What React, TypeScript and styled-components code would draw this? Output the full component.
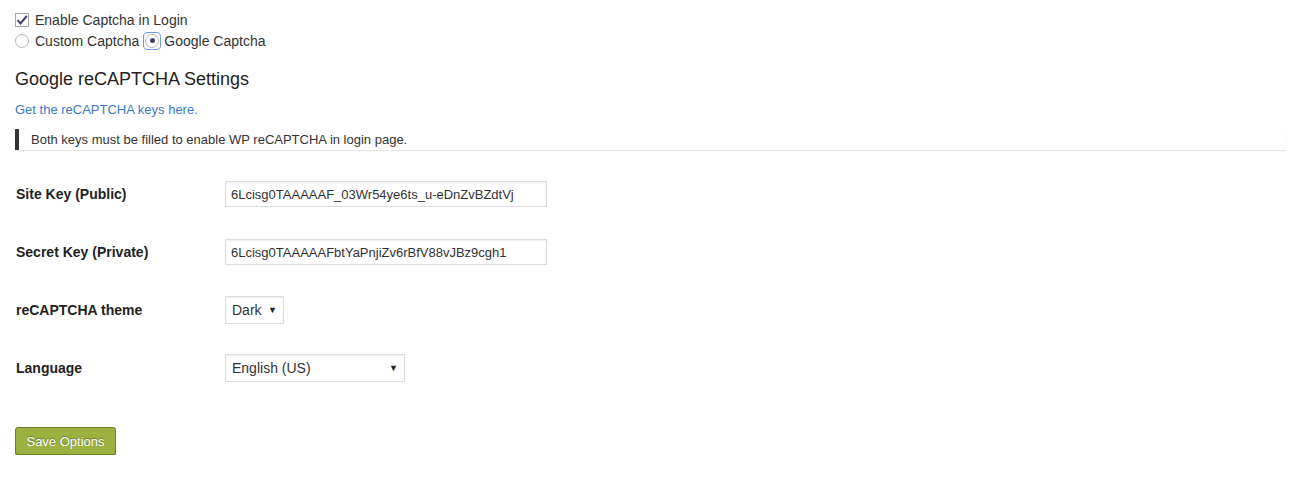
import React from "react";
import styled, { createGlobalStyle } from 'styled-components'

const Global = createGlobalStyle`
  html, body { margin: 0; padding: 0; background: #fff; }
  body { font-family: "Liberation Sans", Arial, sans-serif; color: #333; }
`

const Page = styled.div`
  padding: 12px 3px 0 15px;
  width: 1271px;
`

const OptionRow = styled.div`
  display: flex;
  align-items: center;
  height: 15px;
  font-size: 14px;
  color: #333;
  margin-bottom: 6px;
`

const Box = styled.span`
  width: 12px;
  height: 12px;
  border: 1px solid #a8a8a8;
  background: #fff;
  display: inline-flex;
  align-items: center;
  justify-content: center;
  margin-right: 6px;
`

type RadioProps = { focused?: boolean }

const RadioWrap = styled.span<RadioProps>`
  display: inline-flex;
  align-items: center;
  justify-content: center;
  width: 14px;
  height: 14px;
  margin: 0 ${(p: RadioProps) => (p.focused ? '5px' : '6px')} 0 ${(p: RadioProps) => (p.focused ? '6px' : '0')};
  border-radius: 2px;
  outline: ${(p: RadioProps) => (p.focused ? '1px solid #6aa0e6' : 'none')};
  outline-offset: 1px;
`

const Circle = styled.span`
  width: 12px;
  height: 12px;
  border: 1px solid #b8b8b8;
  border-radius: 50%;
  display: inline-flex;
  align-items: center;
  justify-content: center;
  background: #fff;
`

const Dot = styled.span`
  width: 5px;
  height: 5px;
  border-radius: 50%;
  background: #4a3f6b;
`

const Heading = styled.h3`
  font-size: 18px;
  font-weight: normal;
  color: #222;
  margin: 20px 0 0;
  line-height: 22px;
`

const KeyLink = styled.a`
  display: block;
  font-size: 13px;
  color: #3a7bc8;
  text-decoration: none;
  margin-top: 12px;
  line-height: 16px;
`

const Notice = styled.div`
  margin-top: 11px;
  border-left: 4px solid #333;
  background: #fff;
  box-shadow: 0 1px 1px rgba(0, 0, 0, 0.1);
  padding: 0 12px;
  height: 21px;
  display: flex;
  align-items: center;
  font-size: 13px;
  color: #333;
`

const FormTable = styled.div`
  display: grid;
  grid-template-columns: 210px 1fr;
  grid-auto-rows: 58px;
  margin-top: 15px;
`

const Label = styled.div`
  display: flex;
  align-items: center;
  font-size: 14px;
  font-weight: bold;
  color: #222;
  padding-left: 1px;
`

const Field = styled.div`
  display: flex;
  align-items: center;
`

const TextInput = styled.input`
  width: 322px;
  height: 26px;
  box-sizing: border-box;
  border: 1px solid #ddd;
  box-shadow: inset 0 1px 2px rgba(0, 0, 0, 0.07);
  padding: 0 5px;
  font-family: "Liberation Sans", Arial, sans-serif;
  font-size: 13px;
  color: #333;
  outline: none;
`

type SelectProps = { width: number }

const SelectBox = styled.div<SelectProps>`
  width: ${(p: SelectProps) => p.width}px;
  height: 28px;
  box-sizing: border-box;
  border: 1px solid #ddd;
  box-shadow: inset 0 1px 2px rgba(0, 0, 0, 0.07);
  display: flex;
  align-items: center;
  justify-content: space-between;
  padding: 0 6px;
  font-size: 14px;
  color: #333;
`

const Caret = styled.span`
  font-size: 9px;
  color: #222;
`

const SaveButton = styled.button`
  margin-top: 30px;
  width: 101px;
  height: 28px;
  background: #9cb13f;
  border: 1px solid #6f7f2a;
  border-radius: 3px;
  box-shadow: 0 1px 0 #7d8e33;
  color: #fff;
  font-family: "Liberation Sans", Arial, sans-serif;
  font-size: 13px;
  text-shadow: 0 -1px 1px rgba(0, 0, 0, 0.35);
  padding: 0;
  cursor: pointer;
`

export default function App() {
  return (
    <>
      <Global />
      <Page>
        <OptionRow>
          <Box>
            <svg width="12" height="12" viewBox="0 0 12 12">
              <path d="M1.5 6.2 L4.5 9.5 L10.8 1.8" stroke="#4a3b6a" strokeWidth="2" fill="none" />
            </svg>
          </Box>
          Enable Captcha in Login
        </OptionRow>
        <OptionRow>
          <RadioWrap><Circle /></RadioWrap>
          Custom Captcha
          <RadioWrap focused><Circle><Dot /></Circle></RadioWrap>
          Google Captcha
        </OptionRow>
        <Heading>Google reCAPTCHA Settings</Heading>
        <KeyLink href="#">Get the reCAPTCHA keys here.</KeyLink>
        <Notice>Both keys must be filled to enable WP reCAPTCHA in login page.</Notice>
        <FormTable>
          <Label>Site Key (Public)</Label>
          <Field><TextInput readOnly value="6Lcisg0TAAAAAF_03Wr54ye6ts_u-eDnZvBZdtVj" /></Field>
          <Label>Secret Key (Private)</Label>
          <Field><TextInput readOnly value="6Lcisg0TAAAAAFbtYaPnjiZv6rBfV88vJBz9cgh1" /></Field>
          <Label>reCAPTCHA theme</Label>
          <Field><SelectBox width={59}>Dark<Caret>▼</Caret></SelectBox></Field>
          <Label>Language</Label>
          <Field><SelectBox width={180}>English (US)<Caret>▼</Caret></SelectBox></Field>
        </FormTable>
        <SaveButton>Save Options</SaveButton>
      </Page>
    </>
  )
}
